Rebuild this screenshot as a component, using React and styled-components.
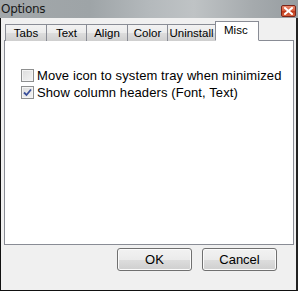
import React from "react";
import styled, { createGlobalStyle } from "styled-components";

const GlobalStyle = createGlobalStyle`
	html, body {
		margin: 0;
		padding: 0;
		background: #ffffff;
	}
	body {
		font-family: "Liberation Sans", Arial, sans-serif;
	}
`;

const tabs = [
	{ label: "Tabs", width: 42 },
	{ label: "Text", width: 41 },
	{ label: "Align", width: 42 },
	{ label: "Color", width: 41 },
	{ label: "Uninstall", width: 49 },
	{ label: "Misc", width: 40, active: true },
];

const options = [
	{ label: "Move icon to system tray when minimized", checked: false },
	{ label: "Show column headers (Font, Text)", checked: true },
];

const App = () => {
	return (
		<>
			<GlobalStyle />
			<Window>
				<TitleBar>
					<Title>Options</Title>
					<CloseButton>
						<svg width="9" height="8" viewBox="0 0 9 8">
							<path
								d="M1 1 L8 7 M8 1 L1 7"
								stroke="#ffffff"
								strokeWidth="2"
								strokeLinecap="square"
							/>
						</svg>
					</CloseButton>
				</TitleBar>
				<Body>
					{/* tabs */}
					<TabStrip>
						{tabs.map((tab) => (
							<Tab key={tab.label} $width={tab.width} $active={tab.active}>
								{tab.label}
							</Tab>
						))}
					</TabStrip>
					<Panel>
						{options.map((opt) => (
							<CheckRow key={opt.label}>
								<CheckBox $checked={opt.checked}>
									{opt.checked && (
										<svg width="9" height="9" viewBox="0 0 9 9">
											<path
												d="M1 4.5 L3.5 7 L8 1.5"
												stroke="#3a4f9a"
												strokeWidth="1.8"
												fill="none"
											/>
										</svg>
									)}
								</CheckBox>
								<span>{opt.label}</span>
							</CheckRow>
						))}
					</Panel>
					{/* buttons */}
					<ButtonRow>
						<Button>OK</Button>
						<Button>Cancel</Button>
					</ButtonRow>
				</Body>
			</Window>
		</>
	);
};

const Window = styled.div`
	width: 298px;
	height: 293px;
	display: flex;
	flex-direction: column;
	overflow: hidden;
`;

const TitleBar = styled.div`
	height: 18px;
	display: flex;
	align-items: flex-start;
	background: linear-gradient(
		90deg,
		#a2a7aa 0%,
		#9ea4a7 30%,
		#b4b9bc 50%,
		#bfc3c5 65%,
		#a5aaad 85%,
		#979da1 100%
	);
`;

const Title = styled.div`
	font-family: "DejaVu Sans", "Noto Sans", sans-serif;
	font-size: 12px;
	color: #1a1a1a;
	padding: 2px 0 0 1px;
	letter-spacing: -0.3px;
`;

const CloseButton = styled.div`
	margin: 5px 2px 0 auto;
	width: 15px;
	height: 12px;
	box-sizing: border-box;
	border: 1px solid #7b2418;
	border-radius: 2px;
	background: linear-gradient(#e98a6f, #d5593a 50%, #c03c1c 55%, #d8623f);
	display: flex;
	align-items: center;
	justify-content: center;
`;

const Body = styled.div`
	flex: 1;
	background: #f0f0f0;
	border-left: 1px solid #111;
	border-right: 2px solid #222;
	border-bottom: 1px solid #111;
	margin-bottom: 2px;
	display: flex;
	flex-direction: column;
	padding: 3px 2px 0 3px;
`;

const TabStrip = styled.div`
	display: flex;
	align-items: flex-end;
	height: 20px;
	padding-left: 1px;
	position: relative;
	z-index: 1;
	margin-bottom: -1px;
`;

const Tab = styled.div`
	box-sizing: border-box;
	width: ${(p) => (p.$active ? p.$width + 4 : p.$width)}px;
	height: ${(p) => (p.$active ? 20 : 17)}px;
	margin: ${(p) => (p.$active ? "0 -2px" : "0")};
	border: 1px solid #898c95;
	border-bottom: ${(p) => (p.$active ? "1px solid #ffffff" : "none")};
	background: ${(p) =>
		p.$active ? "#ffffff" : "linear-gradient(#f2f2f2, #ebebeb 50%, #dddddd 51%, #cfcfcf)"};
	font-size: 11.5px;
	color: #000;
	white-space: nowrap;
	text-align: ${(p) => (p.$active ? "left" : "center")};
	padding: ${(p) => (p.$active ? "1px 0 0 8px" : "1px 0 0 0")};
	line-height: 15px;
	position: relative;
	z-index: ${(p) => (p.$active ? 2 : 1)};
	& + & {
		margin-left: ${(p) => (p.$active ? "-1px" : "1px")};
	}
`;

const Panel = styled.div`
	height: 205px;
	box-sizing: border-box;
	background: #ffffff;
	border: 1px solid #898c95;
	padding: 28px 0 0 16px;
	display: flex;
	flex-direction: column;
	gap: 4px;
`;

const CheckRow = styled.div`
	display: flex;
	align-items: center;
	gap: 3px;
	font-size: 13px;
	letter-spacing: 0.1px;
	color: #000;
	height: 13px;
`;

const CheckBox = styled.div`
	width: 13px;
	height: 13px;
	box-sizing: border-box;
	border: 1px solid #8e8f8f;
	background: linear-gradient(135deg, #dcdcdc, #f4f4f4);
	box-shadow: inset 0 0 0 1px #f4f4f4;
	display: flex;
	align-items: center;
	justify-content: center;
`;

const ButtonRow = styled.div`
	display: flex;
	justify-content: flex-end;
	gap: 10px;
	padding: 3px 17px 0 0;
`;

const Button = styled.div`
	width: 75px;
	height: 23px;
	box-sizing: border-box;
	border: 1px solid #707070;
	border-radius: 3px;
	background: linear-gradient(#f2f2f2, #ebebeb 50%, #dddddd 51%, #cfcfcf);
	box-shadow: inset 0 0 0 1px #fbfbfb;
	font-size: 13px;
	display: flex;
	align-items: center;
	justify-content: center;
	color: #000;
`;

export default App;
